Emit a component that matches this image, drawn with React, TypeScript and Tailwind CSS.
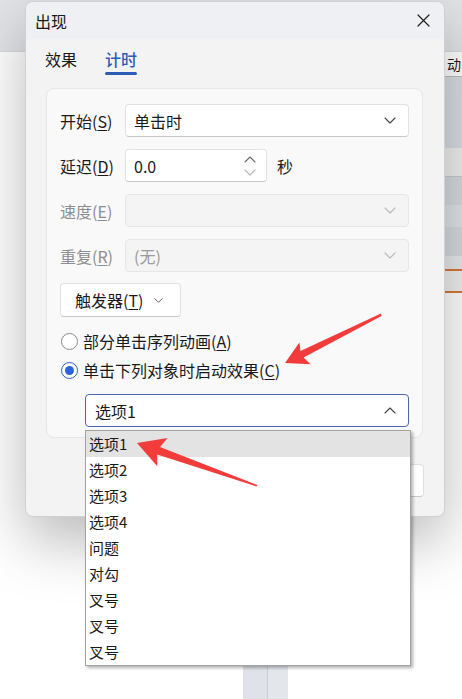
import React from 'react';

const Chevron = ({ up = false, className = '' }: { up?: boolean; className?: string }) => (
  <svg
    width="12"
    height="7"
    viewBox="0 0 12 7"
    className={className}
    fill="none"
    stroke="currentColor"
    strokeWidth="1.1"
    strokeLinecap="round"
    strokeLinejoin="round"
  >
    {up ? <path d="M1 6 L6 1 L11 6" /> : <path d="M1 1 L6 6 L11 1" />}
  </svg>
);

const Key = ({ k }: { k: string }) => (
  <>
    (<span className="underline underline-offset-2">{k}</span>)
  </>
);

const Row = ({
  label,
  disabled = false,
  children,
}: {
  label: React.ReactNode;
  disabled?: boolean;
  children: React.ReactNode;
}) => (
  <div className="flex items-center h-[33px]">
    <div
      className={
        disabled
          ? 'w-[65px] shrink-0 text-[16px] leading-[20px] text-[#8e8e8e]'
          : 'w-[65px] shrink-0 text-[16px] leading-[20px] text-[#1a1a1a]'
      }
    >
      {label}
    </div>
    {children}
  </div>
);

const options = ['选项1', '选项2', '选项3', '选项4', '问题', '对勾', '叉号', '叉号', '叉号'];

const App = () => {
  return (
    <div className="relative w-[462px] h-[699px] overflow-hidden bg-white font-['Noto_Sans_CJK_SC','Noto_Sans',sans-serif] text-[#1a1a1a]">
      {/* app behind the dialog */}
      <div className="flex flex-col h-full">
        <div className="h-[52px] shrink-0 bg-[#e2e3e7] border-b border-[#d6d7db]" />
        <div className="flex flex-1">
          <div className="flex-1" />
          <div className="w-[17px] flex flex-col text-[14px]">
            <div className="h-[25px] flex justify-end items-center pr-[1px] border-b border-[#bdbdbd] leading-[18px]">
              动
            </div>
            <div className="h-[71px] bg-[#d9dde3]" />
            <div className="h-[28px] bg-[#efefef]" />
            <div className="h-[29px] bg-[#d7dbe1] border-t border-[#c7cbd1]" />
            <div className="h-[22px] bg-[#e1e4e8]" />
            <div className="h-[29px] bg-[#d7dbe1]" />
            <div className="h-[13px] bg-[#e8eaed]" />
            <div className="h-[2px] bg-[#d9773a]" />
            <div className="h-[20px] bg-[#f0f0f0]" />
            <div className="h-[2px] bg-[#d9773a]" />
            <div className="flex-1" />
          </div>
        </div>
        <div className="h-[34px] shrink-0 flex">
          <div className="ml-[243px] w-[25px] bg-[#dfe3e9] border-r border-[#c9ced6]" />
          <div className="w-[20px] bg-[#e3e7ec]" />
        </div>
      </div>

      {/* dialog window */}
      <div className="absolute left-[25px] top-[1px] w-[420px] h-[516px] flex flex-col bg-[#f3f3f3] border border-[#cfd0d3] rounded-[8px] shadow-[0_24px_60px_rgba(0,0,0,0.28)]">
        <div className="h-[37px] shrink-0 flex items-center justify-between pl-[9px] pr-[14px] bg-[#eff0f3] rounded-t-[8px]">
          <span className="text-[16px] leading-[20px]">出现</span>
          <svg width="13" height="13" viewBox="0 0 13 13" stroke="#1f1f1f" strokeWidth="1.2" strokeLinecap="round">
            <path d="M1 1 L12 12 M12 1 L1 12" />
          </svg>
        </div>
        <div className="h-[36px] shrink-0 flex gap-[28px] pl-[19px] pt-[10px]">
          <div className="flex flex-col">
            <span className="text-[16px] leading-[20px] text-[#1a1a1a]">效果</span>
          </div>
          <div className="flex flex-col">
            <span className="text-[16px] leading-[20px] text-[#2d5bb5] font-medium">计时</span>
            <div className="mt-[3px] h-[3px] rounded-full bg-[#2d5bb5]" />
          </div>
        </div>

        <div className="mt-[13px] ml-[20px] mr-[21px] h-[350px] flex flex-col px-[13px] pt-[15px] bg-[#f9f9f9] border border-[#e6e6e6] rounded-[8px]">
          <Row label={<>开始<Key k="S" /></>}>
            <div className="flex-1 h-[33px] flex items-center justify-between pl-[8px] pr-[12px] bg-white border border-[#e2e2e2] border-b-[#c8c8c8] rounded-[4px]">
              <span className="text-[16px] leading-[20px]">单击时</span>
              <Chevron className="text-[#444]" />
            </div>
          </Row>
          <div className="mt-[12px]">
            <Row label={<>延迟<Key k="D" /></>}>
              <div className="w-[142px] h-[33px] flex items-center justify-between pl-[8px] pr-[10px] bg-white border border-[#e2e2e2] border-b-[#c8c8c8] rounded-[4px]">
                <span className="text-[16px] leading-[20px]">0.0</span>
                <div className="flex flex-col gap-[6px]">
                  <Chevron up className="text-[#6a6a6a]" />
                  <Chevron className="text-[#b5b5b5]" />
                </div>
              </div>
              <span className="ml-[10px] text-[16px] leading-[20px]">秒</span>
            </Row>
          </div>
          <div className="mt-[12px]">
            <Row label={<>速度<Key k="E" /></>} disabled>
              <div className="flex-1 h-[33px] flex items-center justify-end pr-[12px] bg-[#f4f4f4] border border-[#e6e6e6] rounded-[4px]">
                <Chevron className="text-[#b8b8b8]" />
              </div>
            </Row>
          </div>
          <div className="mt-[12px]">
            <Row label={<>重复<Key k="R" /></>} disabled>
              <div className="flex-1 h-[33px] flex items-center justify-between pl-[8px] pr-[12px] bg-[#f4f4f4] border border-[#e6e6e6] rounded-[4px]">
                <span className="text-[16px] leading-[20px] text-[#9a9a9a]">(无)</span>
                <Chevron className="text-[#b8b8b8]" />
              </div>
            </Row>
          </div>
          <div className="mt-[11px] w-[121px] h-[34px] flex items-center gap-[11px] pl-[14px] bg-white border border-[#e2e2e2] border-b-[#c8c8c8] rounded-[4px]">
            <span className="text-[16px] leading-[20px]">
              触发器<Key k="T" />
            </span>
            <Chevron className="text-[#444] w-[9px]" />
          </div>

          <div className="mt-[12px] h-[24px] flex items-center gap-[5px] pl-[1px]">
            <div className="w-[17px] h-[17px] rounded-full border border-[#8b8b8b] bg-white" />
            <span className="text-[16px] leading-[20px]">
              部分单击序列动画<Key k="A" />
            </span>
          </div>
          <div className="mt-[5px] h-[24px] flex items-center gap-[5px] pl-[1px]">
            <div className="w-[17px] h-[17px] rounded-full border border-[#2c5fc4] bg-white flex items-center justify-center">
              <div className="w-[9px] h-[9px] rounded-full bg-[#2b63d8]" />
            </div>
            <span className="text-[16px] leading-[20px]">
              单击下列对象时启动效果<Key k="C" />
            </span>
          </div>
          <div className="mt-[12px] ml-[25px] h-[33px] flex items-center justify-between pl-[9px] pr-[12px] bg-white border border-[#4866ad] rounded-[4px]">
            <span className="text-[16px] leading-[20px]">选项1</span>
            <Chevron up className="text-[#444]" />
          </div>
        </div>

        <div className="mt-[26px] flex justify-end gap-[8px] pr-[20px]">
          <div className="w-[100px] h-[33px] flex items-center justify-center bg-white border border-[#e0e0e0] border-b-[#c8c8c8] rounded-[4px] text-[16px]">
            确定
          </div>
          <div className="w-[100px] h-[33px] flex items-center justify-center bg-white border border-[#e0e0e0] border-b-[#c8c8c8] rounded-[4px] text-[16px]">
            取消
          </div>
        </div>
      </div>

      {/* open dropdown list */}
      <div className="absolute left-[85px] top-[430px] w-[326px] flex flex-col bg-white border border-[#a3a3a3] shadow-[2px_2px_3px_rgba(0,0,0,0.3)]">
        {options.map((o, i) => (
          <div
            key={i}
            className={
              i === 0
                ? 'h-[26px] flex items-center px-[3px] bg-[#e3e3e3] text-[15px] leading-[20px]'
                : 'h-[26px] flex items-center px-[3px] text-[15px] leading-[20px]'
            }
          >
            {o}
          </div>
        ))}
      </div>

      {/* annotation arrows */}
      <svg className="absolute inset-0 pointer-events-none" width="462" height="699" viewBox="0 0 462 699">
        <polygon
          fill="#f23b3b"
          points="381,313.5 300.5,351 299.4,342.5 285,363 310.5,364.2 303.6,357.4 381.5,316"
        />
        <polygon
          fill="#f23b3b"
          points="257.5,485 160,447 167.5,438 137,443 157.3,466.2 157.2,454.6 256.5,486.5"
        />
      </svg>
    </div>
  );
};

export default App;
